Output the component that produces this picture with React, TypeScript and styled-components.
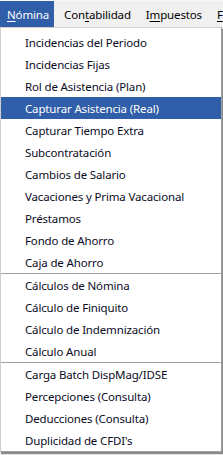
import React from "react";
import styled, { createGlobalStyle } from "styled-components";

const GlobalStyle = createGlobalStyle`
  html, body {
    margin: 0;
    padding: 0;
    background: #ffffff;
  }
  body {
    width: 223px;
    height: 455px;
    overflow: hidden;
    font-family: "Noto Sans", "Open Sans", sans-serif;
  }
`;

const HIGHLIGHT = "#305ea8";

const Screen = styled.div`
  width: 223px;
  height: 455px;
  display: flex;
  flex-direction: column;
  background: #f0f0f0;
`;

const MenuBar = styled.div`
  height: 27px;
  display: flex;
  align-items: stretch;
  background: #f0f0f0;
  border-top: 1px solid #f7f7f7;
  box-sizing: border-box;
  overflow: hidden;
  white-space: nowrap;
`;

const BarItem = styled.div<{ $active?: boolean }>`
  display: flex;
  align-items: center;
  padding: 0 5px 0 7px;
  margin-right: 3px;
  font-size: 11.5px;
  letter-spacing: -0.15px;
  color: ${p => (p.$active ? "#ffffff" : "#000000")};
  background: ${p => (p.$active ? HIGHLIGHT : "transparent")};

  u {
    text-decoration-thickness: 1px;
    text-underline-offset: 2px;
  }
`;

const Panel = styled.div`
  width: 222px;
  box-sizing: border-box;
  background: #ffffff;
  border: 1px solid #cfcfcf;
  border-right-color: #a0a0a0;
  border-bottom-color: #a0a0a0;
  padding: 3px 0 0;
  box-shadow: 1px 2px 0 #8a8a8a, 2px 2px 1px rgba(0, 0, 0, 0.25);
`;

const Item = styled.div<{ $selected?: boolean }>`
  height: 22px;
  display: flex;
  align-items: center;
  padding-left: 24px;
  font-size: 11.5px;
  letter-spacing: -0.15px;
  color: ${p => (p.$selected ? "#ffffff" : "#0b0b1e")};
  background: ${p => (p.$selected ? HIGHLIGHT : "transparent")};
  white-space: nowrap;
`;

const Separator = styled.div`
  height: 1px;
  background: #a0a0a0;
`;

type Entry = { label: string; selected?: boolean } | "sep";

const entries: Entry[] = [
  { label: "Incidencias del Periodo" },
  { label: "Incidencias Fijas" },
  { label: "Rol de Asistencia (Plan)" },
  { label: "Capturar Asistencia (Real)", selected: true },
  { label: "Capturar Tiempo Extra" },
  { label: "Subcontratación" },
  { label: "Cambios de Salario" },
  { label: "Vacaciones y Prima Vacacional" },
  { label: "Préstamos" },
  { label: "Fondo de Ahorro" },
  { label: "Caja de Ahorro" },
  "sep",
  { label: "Cálculos de Nómina" },
  { label: "Cálculo de Finiquito" },
  { label: "Cálculo de Indemnización" },
  { label: "Cálculo Anual" },
  "sep",
  { label: "Carga Batch DispMag/IDSE" },
  { label: "Percepciones (Consulta)" },
  { label: "Deducciones (Consulta)" },
  { label: "Duplicidad de CFDI's" },
];

export default function App() {
  return (
    <>
      <GlobalStyle />
      <Screen>
        <MenuBar>
          <BarItem $active>
            <u>N</u>ómina
          </BarItem>
          <BarItem>
            Con<u>t</u>abilidad
          </BarItem>
          <BarItem>
            I<u>m</u>puestos
          </BarItem>
          <BarItem>
            <u>F</u>
          </BarItem>
        </MenuBar>
        <Panel>
          {entries.map((e, i) =>
            e === "sep" ? (
              <Separator key={i} />
            ) : (
              <Item key={i} $selected={e.selected}>
                {e.label}
              </Item>
            )
          )}
        </Panel>
      </Screen>
    </>
  );
}
